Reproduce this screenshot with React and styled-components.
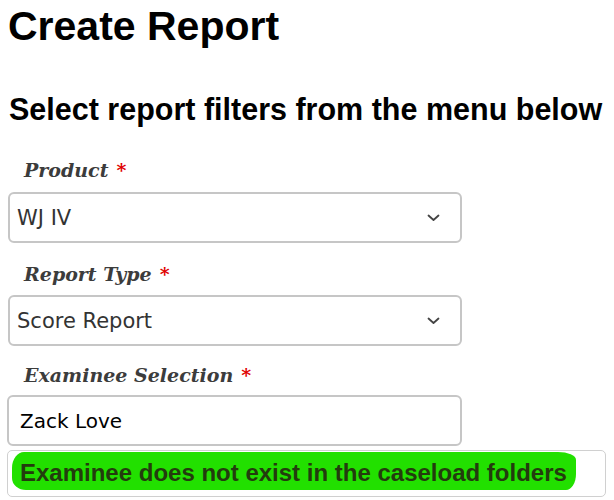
import React from 'react';
import styled, { createGlobalStyle } from 'styled-components';

const GlobalStyle = createGlobalStyle`
  body {
    margin: 0;
    background: #fff;
    font-family: "Liberation Sans", Arial, sans-serif;
  }
`;

const Page = styled.div`
  width: 614px;
  height: 500px;
  padding: 0 0 0 8px;
  box-sizing: border-box;
  overflow: hidden;
`;

const Title = styled.h1`
  margin: 0;
  padding-top: 3px;
  font-size: 41px;
  line-height: 46px;
  font-weight: 700;
  color: #000;
`;

const Subtitle = styled.h2`
  margin: 43px 0 0 1px;
  font-size: 30.5px;
  line-height: 34px;
  font-weight: 700;
  color: #000;
  white-space: nowrap;
`;

const Form = styled.div`
  display: flex;
  flex-direction: column;
  margin-top: 30px;
`;

const Label = styled.label`
  display: block;
  padding-left: 16px;
  font-family: "DejaVu Serif", Georgia, serif;
  font-style: italic;
  font-weight: 700;
  font-size: 19px;
  line-height: 28px;
  color: #3c3c3c;
  margin-top: ${(p) => p.$top || 0}px;
  margin-bottom: ${(p) => p.$bottom || 8}px;
`;

const Required = styled.span`
  color: #e00000;
  font-style: normal;
  margin-left: 8px;
`;

const Select = styled.div`
  width: 454px;
  height: 51px;
  box-sizing: border-box;
  border: 2px solid #c6c6c6;
  border-radius: 6px;
  display: flex;
  align-items: center;
  justify-content: space-between;
  padding: 0 20px 0 7px;
  font-family: "DejaVu Sans", Tahoma, Verdana, sans-serif;
  font-size: 21px;
  color: #333;
`;

const Input = styled(Select)`
  width: 455px;
  margin-left: -1px;
  padding-left: 11px;
  color: #000;
  font-size: 20px;
`;

const Message = styled.div`
  width: 599px;
  height: 47px;
  margin: 4px 0 0 -1px;
  box-sizing: border-box;
  border: 1px solid #d0d0d0;
  border-radius: 5px;
  padding: 1px 4px;
`;

const Highlight = styled.span`
  display: inline-block;
  background: #22e000;
  border-radius: 12px 18px 10px 14px / 16px 8px 16px 12px;
  padding: 6px 9px 2px 8px;
  font-weight: 700;
  font-size: 24px;
  line-height: 30px;
  color: #233c0e;
  white-space: nowrap;
`;

const Chevron = () => (
  <svg width="13" height="8" viewBox="0 0 13 8">
    <polyline points="1.5,1.5 6.5,6 11.5,1.5" fill="none" stroke="#444" strokeWidth="1.8" strokeLinecap="round" strokeLinejoin="round" />
  </svg>
);

export default function App() {
  return (
    <Page>
      <GlobalStyle />
      <Title>Create Report</Title>
      <Subtitle>Select report filters from the menu below</Subtitle>
      <Form>
        <Label>Product<Required>*</Required></Label>
        <Select>
          <span>WJ IV</span>
          <Chevron />
        </Select>
        <Label $top={17} $bottom={7}>Report Type<Required>*</Required></Label>
        <Select>
          <span>Score Report</span>
          <Chevron />
        </Select>
        <Label $top={15} $bottom={6}>Examinee Selection<Required>*</Required></Label>
        <Input>Zack Love</Input>
        <Message>
          <Highlight>Examinee does not exist in the caseload folders</Highlight>
        </Message>
      </Form>
    </Page>
  );
}
